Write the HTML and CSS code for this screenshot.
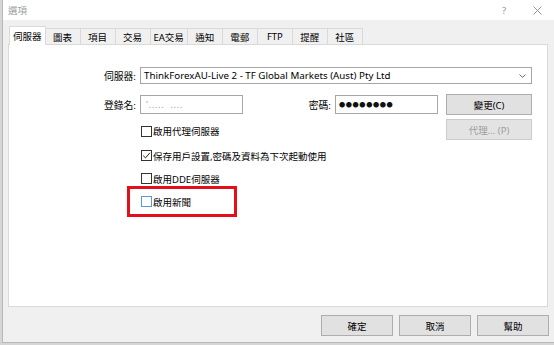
FILE: index.html
```html
<!DOCTYPE html>
<html lang="zh-Hant">
<head>
<meta charset="utf-8">
<title>選項</title>
<link rel="stylesheet" href="styles.css">
</head>
<body>
<div class="window">
  <div class="titlebar">
    <span class="title">選項</span>
    <span class="help">?</span>
    <span class="close"><svg width="9" height="9" viewBox="0 0 9 9"><path d="M0.5 0.5L8.5 8.5M8.5 0.5L0.5 8.5" stroke="#8a8a8a" stroke-width="0.9" fill="none"/></svg></span>
  </div>
  <div class="tabs">
    <div class="tab active">伺服器</div>
    <div class="tab">圖表</div>
    <div class="tab">項目</div>
    <div class="tab">交易</div>
    <div class="tab">EA交易</div>
    <div class="tab">通知</div>
    <div class="tab">電郵</div>
    <div class="tab">FTP</div>
    <div class="tab">提醒</div>
    <div class="tab">社區</div>
  </div>
  <div class="panel">
    <div class="form">
      <div class="lbl r1">伺服器:</div>
      <div class="select r1">
        <span class="select-text">ThinkForexAU-Live 2 - TF Global Markets (Aust) Pty Ltd</span>
        <svg class="chev" width="7" height="4" viewBox="0 0 7 4"><path d="M0.5 0.5L3.5 3.3L6.5 0.5" stroke="#555" stroke-width="0.9" fill="none"/></svg>
      </div>
      <div class="lbl r3">登錄名:</div>
      <div class="input login r3">'..... &nbsp;....</div>
      <div class="lbl lbl-pwd r3">密碼:</div>
      <div class="input pwd r3">●●●●●●●●</div>
      <div class="btn c6 r3">變更(C)</div>
      <label class="check cb1">
        <span class="box"></span><span>啟用代理伺服器</span>
      </label>
      <div class="btn disabled c6 r5">代理... (P)</div>
      <label class="check cb2">
        <span class="box checked"><svg width="9" height="9" viewBox="0 0 9 9"><path d="M1.2 4.6L3.5 6.9L7.9 1.8" stroke="#222" stroke-width="1" fill="none"/></svg></span><span>保存用戶設置,密碼及資料為下次起動使用</span>
      </label>
      <label class="check cb3">
        <span class="box"></span><span>啟用DDE伺服器</span>
      </label>
      <label class="check cb4 highlighted">
        <span class="box focus"></span><span>啟用新聞</span>
      </label>
    </div>
  </div>
  <div class="footer">
    <div class="btn fbtn">確定</div>
    <div class="btn fbtn">取消</div>
    <div class="btn fbtn">幫助</div>
  </div>
</div>
</body>
</html>
```
FILE: styles.css
```css
*, *::before, *::after { box-sizing: border-box; }
html, body { margin: 0; padding: 0; }
body {
  background: #d6d6d6;
  font-family: "Noto Sans", "Noto Sans CJK TC", sans-serif;
  font-size: 9.5px;
  color: #000;
  width: 554px;
  height: 345px;
  overflow: hidden;
}
.window {
  margin-left: 2px;
  width: 552px;
  height: 343px;
  border-left: 1px solid #b8b8b8;
  border-bottom: 1px solid #b8b8b8;
  background: #f0f0f0;
  display: flex;
  flex-direction: column;
}
.titlebar {
  height: 20px;
  background: #fff;
  display: flex;
  align-items: center;
  padding: 0 12px 0 5px;
}
.title { color: #9a9a9a; }
.help { margin-left: auto; color: #9a9a9a; margin-right: 27px; }
.close { display: flex; }

.tabs {
  display: flex;
  align-items: flex-end;
  height: 24px;
  margin-left: 6px;
}
.tab {
  height: 16px;
  min-width: 36px;
  padding: 0 3px;
  border: 1px solid #d9d9d9;
  border-bottom: none;
  background: #f0f0f0;
  margin-left: -1px;
  display: flex;
  align-items: center;
  justify-content: center;
  white-space: nowrap;
}
.tab:first-child { margin-left: 0; }
.tab.active {
  height: 19px;
  background: #fff;
  margin-bottom: -1px;
  position: relative;
  z-index: 1;
  padding: 0 3px;
}
.panel {
  margin-left: 5px;
  width: 540px;
  height: 263px;
  background: #fff;
  border: 1px solid #d9d9d9;
  padding-top: 22px;
}
.form {
  display: grid;
  grid-template-columns: 131px 103px 92px 103px 8px 86px;
  grid-template-rows: 17px 10px 21px 4px 21px 4px 23px 23px 23px;
}
.r1 { grid-row: 1; }
.r3 { grid-row: 3; }
.r5 { grid-row: 5; }
.lbl {
  grid-column: 1;
  text-align: right;
  padding-right: 4px;
  align-self: center;
  font-size: 9.8px;
}
.lbl-pwd { grid-column: 3; }
.select {
  grid-column: 2 / 7;
  border: 1px solid #a6a6a6;
  display: flex;
  align-items: center;
  padding: 0 5px 0 3px;
}
.select-text { flex: 1; font-size: 9.75px; }
.chev { display: block; }
.input {
  height: 19px;
  align-self: center;
  border: 1px solid #a6a6a6;
  display: flex;
  align-items: center;
}
.login { grid-column: 2; padding-left: 5px; color: #8c8c8c; font-size: 8px; letter-spacing: 1px; }
.pwd { grid-column: 4; padding-left: 3px; font-size: 6.2px; letter-spacing: 0.6px; color: #111; }
.btn {
  background: #e1e1e1;
  border: 1px solid #adadad;
  display: flex;
  align-items: center;
  justify-content: center;
}
.c6 { grid-column: 6; }
.btn.disabled { color: #9d9d9d; border-color: #cccccc; background: #e3e3e3; }
.check {
  grid-column: 2 / 6;
  display: flex;
  align-items: center;
  gap: 1px;
}
.cb1 { grid-row: 5; margin-top: 3px; }
.cb2 { grid-row: 7; }
.cb3 { grid-row: 8; }
.cb4 { grid-row: 9; }
.box {
  width: 11px;
  height: 11px;
  border: 1px solid #333;
  margin-left: 1px;
  background: #fff;
  display: flex;
  align-items: center;
  justify-content: center;
}
.box.focus { border-color: #5a9ad8; }
.highlighted { position: relative; }
.highlighted::after {
  content: "";
  position: absolute;
  left: -13px;
  top: -4px;
  width: 110px;
  height: 31px;
  border: 3px solid #e3101c;
}
.footer {
  display: flex;
  justify-content: flex-end;
  gap: 6px;
  padding: 8px 5px 0 0;
}
.fbtn { width: 72px; height: 21px; }
```
